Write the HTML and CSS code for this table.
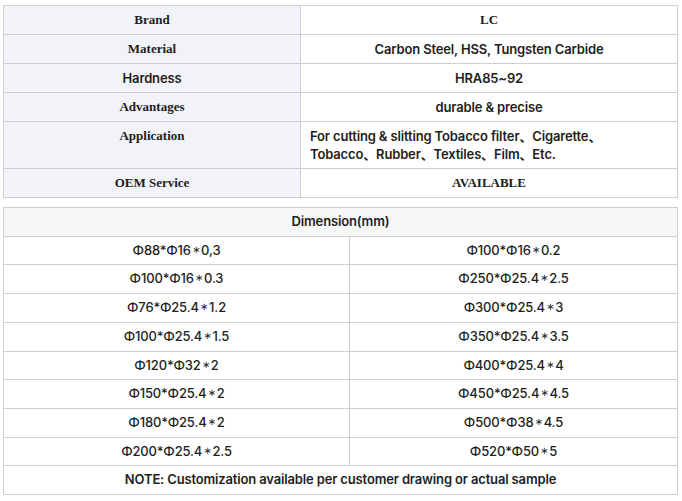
FILE: index.html
```html
<!DOCTYPE html>
<html lang="en">
<head>
<meta charset="utf-8">
<title>Specifications</title>
<link rel="stylesheet" href="styles.css">
</head>
<body>
<div class="page">
  <table class="spec">
    <colgroup><col class="c-label"><col class="c-value"></colgroup>
    <tbody>
      <tr><th class="serif">Brand</th><td class="serif">LC</td></tr>
      <tr><th class="serif">Material</th><td>Carbon Steel, HSS, Tungsten Carbide</td></tr>
      <tr><th>Hardness</th><td>HRA85~92</td></tr>
      <tr><th class="serif">Advantages</th><td>durable &amp; precise</td></tr>
      <tr class="tall"><th class="serif top">Application</th><td class="left">For cutting &amp; slitting Tobacco filter、Cigarette、<br>Tobacco、Rubber、Textiles、Film、Etc.</td></tr>
      <tr><th class="serif">OEM Service</th><td class="serif">AVAILABLE</td></tr>
    </tbody>
  </table>

  <table class="dims">
    <colgroup><col class="c-a"><col class="c-b"></colgroup>
    <thead>
      <tr><th colspan="2">Dimension(mm)</th></tr>
    </thead>
    <tbody>
      <tr><td>Φ88*Φ16<span class="op">∗</span>0,3</td><td>Φ100*Φ16<span class="op">∗</span>0.2</td></tr>
      <tr><td>Φ100*Φ16<span class="op">∗</span>0.3</td><td>Φ250*Φ25.4<span class="op">∗</span>2.5</td></tr>
      <tr><td>Φ76*Φ25.4<span class="op">∗</span>1.2</td><td>Φ300*Φ25.4<span class="op">∗</span>3</td></tr>
      <tr><td>Φ100*Φ25.4<span class="op">∗</span>1.5</td><td>Φ350*Φ25.4<span class="op">∗</span>3.5</td></tr>
      <tr><td>Φ120*Φ32<span class="op">∗</span>2</td><td>Φ400*Φ25.4<span class="op">∗</span>4</td></tr>
      <tr><td>Φ150*Φ25.4<span class="op">∗</span>2</td><td>Φ450*Φ25.4<span class="op">∗</span>4.5</td></tr>
      <tr><td>Φ180*Φ25.4<span class="op">∗</span>2</td><td>Φ500*Φ38<span class="op">∗</span>4.5</td></tr>
      <tr><td>Φ200*Φ25.4<span class="op">∗</span>2.5</td><td>Φ520*Φ50<span class="op">∗</span>5</td></tr>
      <tr><td colspan="2" class="note">NOTE: Customization available per customer drawing or actual sample</td></tr>
    </tbody>
  </table>
</div>
</body>
</html>
```

FILE: styles.css
```css
html, body {
  margin: 0;
  padding: 0;
  background: #ffffff;
}

.page {
  padding: 5px 5px 0 3px;
  display: flex;
  flex-direction: column;
  gap: 9px;
  font-family: Inter, "Noto Sans", "Noto Sans CJK SC", sans-serif;
  color: #1e1e1e;
}

table {
  border-collapse: collapse;
  table-layout: fixed;
  width: 674px;
}

th, td {
  border: 1px solid #cfcfcf;
  padding: 5px 8px 5px;
  height: 18px;
  line-height: 18px;
  font-size: 13px;
  text-align: center;
  vertical-align: middle;
  letter-spacing: -0.15px;
}

.spec th {
  background: #f2f3f8;
  font-weight: 600;
}

.spec td {
  font-weight: 600;
}

.spec .serif {
  font-family: "Liberation Serif", "Times New Roman", serif;
  font-weight: 700;
  letter-spacing: 0;
}

.spec .top {
  vertical-align: top;
}

.spec .left {
  text-align: left;
  padding-left: 9px;
}

.spec .tall th,
.spec .tall td {
  padding-top: 5px;
  padding-bottom: 5px;
  line-height: 18px;
}

.c-label { width: 297px; }
.c-value { width: 377px; }

.c-a { width: 346px; }
.c-b { width: 328px; }

.dims th,
.dims td {
  padding-top: 5px;
  padding-bottom: 5px;
  height: 17.7px;
  line-height: 17.7px;
}

.dims thead th {
  background: #f6f7f9;
  font-weight: 600;
}

.dims td {
  font-weight: 550;
}

.dims .op {
  font-family: "DejaVu Sans", sans-serif;
  font-size: 10px;
  font-weight: 400;
  line-height: 0;
  vertical-align: 2px;
  padding: 0 1px;
}

.dims .note {
  font-weight: 600;
}
```
